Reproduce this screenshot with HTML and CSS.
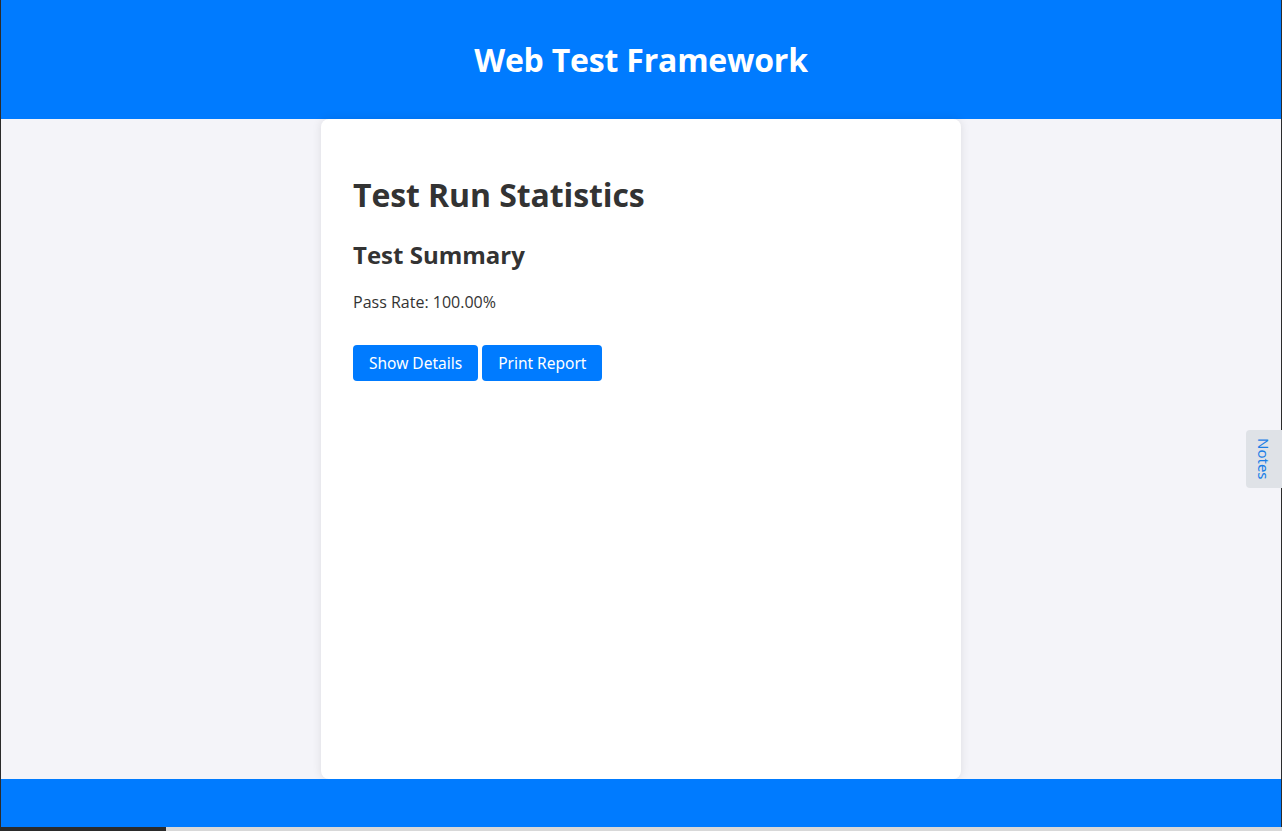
FILE: index.html
```html
<!DOCTYPE html>
<html lang="en">
<head>
<meta charset="utf-8">
<title>Web Test Framework</title>
<link rel="stylesheet" href="styles.css">
</head>
<body>
<div class="frame">
  <header class="site-header">
    <h1 class="site-title">Web Test Framework</h1>
  </header>
  <main class="main">
    <section class="card">
      <h1 class="card-title">Test Run Statistics</h1>
      <h2 class="card-subtitle">Test Summary</h2>
      <p class="stat">Pass Rate: 100.00%</p>
      <div class="actions">
        <button class="btn">Show Details</button>
        <button class="btn">Print Report</button>
      </div>
    </section>
  </main>
  <footer class="site-footer"></footer>
</div>
<div class="notes-tab">Notes</div>
<div class="desk-strip"></div>
</body>
</html>
```
FILE: styles.css
```css
* { box-sizing: border-box; }
html, body { margin: 0; padding: 0; }
body {
  font-family: "Open Sans", "Noto Sans", sans-serif;
  color: #333;
  background: #2b2b2b;
  width: 1282px;
  height: 831px;
  overflow: hidden;
  position: relative;
}
.frame {
  margin: 0 1px;
  display: flex;
  flex-direction: column;
  height: 827px;
  background: #f4f4f9;
}
.site-header {
  background: #007bff;
  height: 119px;
  display: flex;
  align-items: center;
  justify-content: center;
}
.site-title {
  margin: 0;
  color: #fff;
  font-size: 32px;
  font-weight: 700;
  letter-spacing: -0.2px;
}
.main {
  flex: 1;
  display: flex;
  justify-content: center;
}
.card {
  width: 640px;
  background: #fff;
  border-radius: 8px;
  box-shadow: 0 0 10px rgba(0,0,0,0.1);
  padding: 32px 32px;
}
.card-title {
  margin: 23px 0 0;
  font-size: 32px;
  font-weight: 700;
  line-height: 1.3;
  letter-spacing: -0.1px;
}
.card-subtitle {
  margin: 23px 0 0;
  font-size: 24px;
  font-weight: 700;
  line-height: 1.3;
}
.stat {
  margin: 21px 0 0;
  font-size: 16px;
  line-height: 1.4;
}
.actions {
  margin-top: 32px;
  display: flex;
  gap: 4px;
}
.btn {
  font-family: "Noto Sans", "Open Sans", sans-serif;
  background: #007bff;
  color: #fff;
  border: 0;
  border-radius: 4px;
  height: 36px;
  padding: 0 16px;
  font-size: 15.5px;
}
.site-footer {
  background: #007bff;
  height: 48px;
}
.notes-tab {
  position: absolute;
  right: 0;
  top: 430px;
  width: 36px;
  height: 58px;
  background: #dfe2e7;
  border-radius: 4px 0 0 4px;
  color: #1a7ee6;
  font-family: "Noto Sans", sans-serif;
  font-size: 15px;
  writing-mode: vertical-rl;
  display: flex;
  align-items: center;
  justify-content: center;
}
.desk-strip {
  position: absolute;
  left: 166px;
  right: 0;
  bottom: 0;
  height: 4px;
  background: #d8d8d8;
}
```
